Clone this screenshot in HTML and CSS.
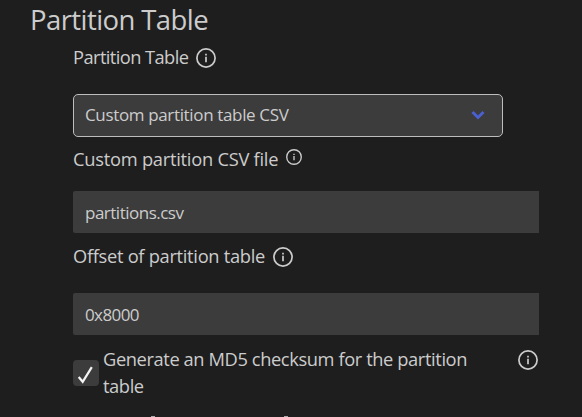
FILE: index.html
```html
<!DOCTYPE html>
<html lang="en">
<head>
<meta charset="utf-8">
<title>Partition Table</title>
<link rel="stylesheet" href="styles.css">
</head>
<body>
<main class="panel">
  <h1 class="title">Partition Table</h1>
  <section class="fields">
    <div class="label label-first"><span class="t1">Partition Table</span>
      <svg class="info" viewBox="0 0 20 20"><circle cx="10" cy="10" r="9.1"/><path d="M10 8.8v5.4M10 5.8v1.6"/></svg></div>
    <div class="select"><span class="t2">Custom partition table CSV</span>
      <svg class="chevron" viewBox="0 0 14 10"><path d="M1.5 2l5.5 5.5L12.5 2"/></svg></div>
    <div class="label label-file"><span class="t3">Custom partition CSV file</span>
      <svg class="info info-small" viewBox="0 0 20 20"><circle cx="10" cy="10" r="9.1"/><path d="M10 8.8v5.4M10 5.8v1.6"/></svg></div>
    <div class="input"><span class="t4">partitions.csv</span></div>
    <div class="label label-offset"><span class="t5">Offset of partition table</span>
      <svg class="info" viewBox="0 0 20 20"><circle cx="10" cy="10" r="9.1"/><path d="M10 8.8v5.4M10 5.8v1.6"/></svg></div>
    <div class="input"><span class="t6">0x8000</span></div>
    <div class="check-row">
      <span class="checkbox"><svg viewBox="0 0 26 26"><path d="M5.7 17l4 4.8L18.8 7.2"/></svg></span>
      <span class="check-text t7">Generate an MD5 checksum for the partition<br>table</span>
      <svg class="info info-end" viewBox="0 0 20 20"><circle cx="10" cy="10" r="9.1"/><path d="M10 8.8v5.4M10 5.8v1.6"/></svg>
    </div>
    <div class="next-section"><i></i><i></i></div>
  </section>
</main>
</body>
</html>
```
FILE: styles.css
```css
* { box-sizing: border-box; }
body {
  margin: 0;
  height: 417px;
  overflow: hidden;
  background: #1e1e1e;
  color: #cccccc;
  font-family: "Open Sans", "Noto Sans", sans-serif;
  font-size: 18.3px;
}
.panel { padding: 2px 0 0 30px; }
.title {
  margin: 0;
  height: 37px;
  line-height: 36px;
  font-size: 27.5px;
  font-weight: 400;
  letter-spacing: -0.58px;
  white-space: nowrap;
}
.fields { margin-left: 43px; width: 466px; }
.label {
  display: flex;
  align-items: center;
  gap: 8px;
  height: 27px;
  line-height: 27px;
  white-space: nowrap;
}
.label span { margin-top: -2px; }
.label-first { margin: 5px 0 23px; }
.label-file { margin: 9px 0 18px; }
.label-offset { margin: 10px 0 23px; }
.info {
  width: 20px;
  height: 20px;
  flex: none;
  fill: none;
  stroke: #cccccc;
  stroke-width: 1.7;
}
.info-small { width: 16px; height: 16px; margin-top: -5px; }
.select {
  display: flex;
  align-items: center;
  justify-content: space-between;
  width: 430px;
  height: 43px;
  padding: 0 17px 2px 11px;
  border: 1px solid #bdbdbd;
  border-radius: 5px;
  background: #3c3c3c;
  font-size: 17px;
}
.chevron {
  width: 14px;
  height: 10px;
  fill: none;
  stroke: #4a5fd0;
  stroke-width: 3;
}
.input {
  display: flex;
  align-items: center;
  height: 42px;
  padding-left: 12px;
  border-radius: 2px 0 0 2px;
  background: #3c3c3c;
  font-size: 17px;
}
.check-row {
  display: flex;
  height: 55px;
  margin-top: 10px;
  line-height: 27px;
}
.checkbox {
  width: 26px;
  height: 26px;
  margin-top: 15px;
  border-radius: 4px;
  background: #3c3c3c;
}
.checkbox svg { display: block; width: 26px; height: 26px; fill: none; stroke: #f4f4f4; stroke-width: 2.2; }
.check-text { margin-left: 4px; white-space: nowrap; }
.info-end { margin: 5px 1px 0 auto; }
.next-section { display: flex; gap: 129px; padding: 16px 0 0 78px; }
.next-section i { width: 4px; height: 1px; background: #aaaaaa; }
.t1 { letter-spacing: -0.58px; }
.t2 { letter-spacing: -0.35px; }
.t3 { letter-spacing: -0.25px; }
.t4 { letter-spacing: -0.5px; }
.t5 { letter-spacing: -0.3px; }
.t6 { letter-spacing: -0.6px; }
.t7 { letter-spacing: -0.4px; }
```
